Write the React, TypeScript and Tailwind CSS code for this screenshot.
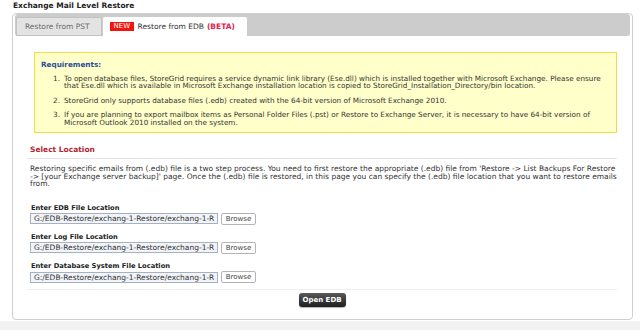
import React from 'react';

const font = "font-['DejaVu_Sans',Verdana,sans-serif]";

const FileField: React.FC<{ label: string; className?: string }> = ({ label, className }) => (
    <div className={className}>
        <div className="text-[6.7px] leading-[8px] font-bold text-[#222] pl-[4px] whitespace-nowrap">{label}</div>
        <div className="flex items-center mt-[1px] pl-[3px]">
            <div className="w-[188px] h-[11px] border border-[#a7b0bf] bg-[#f1f4f9] text-[7.5px] leading-[9px] text-[#333] pl-[3px] whitespace-nowrap">
                G:/EDB-Restore/exchang-1-Restore/exchang-1-R
            </div>
            <div className="ml-[3px] w-[35px] h-[12px] border border-[#b4b4b4] rounded-[2px] bg-white text-[7px] leading-[10px] text-[#444] text-center">
                Browse
            </div>
        </div>
    </div>
);

const App: React.FC = () => {
    return (
        <div className={`w-[640px] h-[330px] bg-[#f1f1f1] ${font} overflow-hidden`}>
            <div className="bg-white h-[321px]">
                <div className="pl-[13px] pt-[1px] h-[13px] text-[7.5px] leading-[9px] font-bold text-[#222]">
                    Exchange Mail Level Restore
                </div>

                <div className="ml-[12px] w-[621px] h-[307px] border border-[#cfcfcf] rounded-[4px] bg-white px-[2px]">
                    {/* tab bar */}
                    <div className="h-[22px] bg-[#cccccc] rounded-[3px] flex items-end pl-[1px]">
                        <div className="w-[86px] h-[19px] bg-[#e3e3e3] border border-[#c2c2c2] rounded-t-[2px] text-[7.5px] leading-[17px] text-[#6b6b6b] pl-[8px] whitespace-nowrap">
                            Restore from PST
                        </div>
                        <div className="ml-[1px] w-[144px] h-[19px] bg-white rounded-t-[2px] flex items-center pl-[7px] whitespace-nowrap">
                            <span className="bg-[#f0150f] text-white text-[7px] leading-[9px] px-[3.5px]">NEW</span>
                            <span className="ml-[4px] text-[7.5px] text-[#333]">Restore from EDB</span>
                            <span className="ml-[3px] text-[7.5px] font-bold text-[#e0204e]">(BETA)</span>
                        </div>
                    </div>

                    {/* requirements */}
                    <div className="ml-[19px] mr-[13px] mt-[16px] h-[81px] border border-[#f4dc46] bg-[#ffffc9] pl-[6px] pt-[8px]">
                        <div className="text-[7.25px] leading-[7.5px] font-bold text-[#2c4f9b]">Requirements:</div>
                        <ol className="mt-[6px] text-[7.25px] leading-[7.5px] text-[#333] flex flex-col gap-[7px] whitespace-nowrap">
                            <li className="flex">
                                <span className="w-[23px] text-right pr-[4px]">1.</span>
                                <span>
                                    To open database files, StoreGrid requires a service dynamic link library (Ese.dll) which is installed together with Microsoft Exchange. Please ensure<br />
                                    that Ese.dll which is available in Microsoft Exchange installation location is copied to StoreGrid_Installation_Directory/bin location.
                                </span>
                            </li>
                            <li className="flex">
                                <span className="w-[23px] text-right pr-[4px]">2.</span>
                                <span>StoreGrid only supports database files (.edb) created with the 64-bit version of Microsoft Exchange 2010.</span>
                            </li>
                            <li className="flex">
                                <span className="w-[23px] text-right pr-[4px]">3.</span>
                                <span>
                                    If you are planning to export mailbox items as Personal Folder Files (.pst) or Restore to Exchange Server, it is necessary to have 64-bit version of<br />
                                    Microsoft Outlook 2010 installed on the system.
                                </span>
                            </li>
                        </ol>
                    </div>

                    {/* select location */}
                    <div className="ml-[12px] mr-[13px]">
                        <div className="mt-[13px] pl-[3px] text-[7.5px] leading-[8px] font-bold text-[#b31d2d]">Select Location</div>
                        <div className="mt-[4px] h-[1px] bg-[#e4e4e4]" />
                        <p className="mt-[6px] pl-[3px] text-[7.5px] leading-[7.5px] text-[#333] whitespace-nowrap">
                            Restoring specific emails from (.edb) file is a two step process. You need to first restore the appropriate (.edb) file from 'Restore -&gt; List Backups For Restore<br />
                            -&gt; [your Exchange server backup]' page. Once the (.edb) file is restored, in this page you can specify the (.edb) file location that you want to restore emails<br />
                            from.
                        </p>

                        <FileField label="Enter EDB File Location" className="mt-[16px]" />
                        <FileField label="Enter Log File Location" className="mt-[8px]" />
                        <FileField label="Enter Database System File Location" className="mt-[8.5px]" />

                        <div className="mt-[5.5px] h-[1px] bg-[#efefef]" />
                        <div className="flex justify-center mt-[3px]">
                            <div className="w-[47px] h-[14px] rounded-[3px] bg-gradient-to-b from-[#5a5a5a] to-[#1e1e1e] shadow-[0_1px_1px_rgba(0,0,0,0.3)] text-white text-[7px] leading-[14px] font-bold text-center">
                                Open EDB
                            </div>
                        </div>
                    </div>
                </div>
            </div>
        </div>
    );
};

export default App;
